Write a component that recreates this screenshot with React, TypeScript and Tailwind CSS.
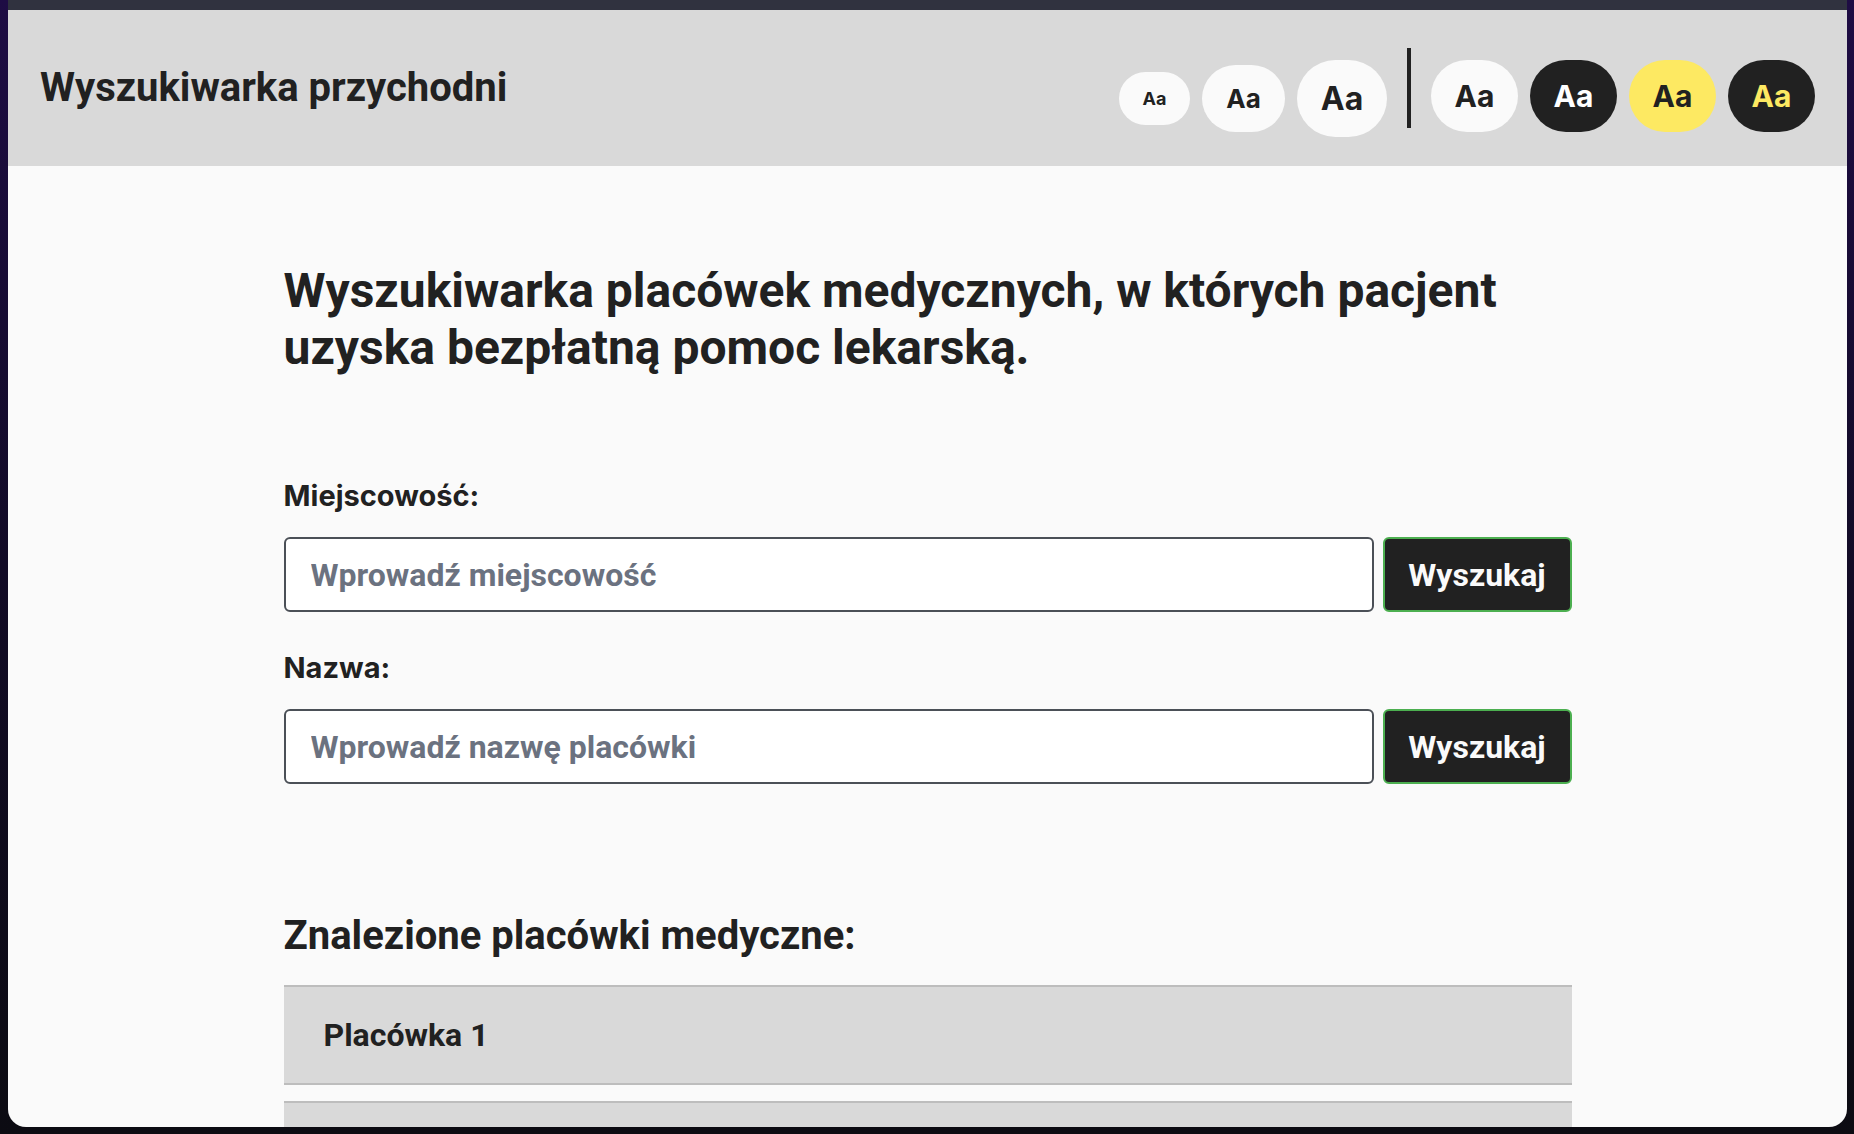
import { useState } from "react";

const sizeButtons = [
  { size: "text-[18px] w-[71px] h-[53px]" },
  { size: "text-[26px] w-[83px] h-[67px]" },
  { size: "text-[32px] w-[90px] h-[77px]" },
];

const themeButtons = [
  { cls: "bg-[#fafafa] text-[#212121]" },
  { cls: "bg-[#212121] text-white" },
  { cls: "bg-[#fde962] text-[#212121]" },
  { cls: "bg-[#212121] text-[#fde962]" },
];

function SearchField({ label, placeholder }: { label: string; placeholder: string }) {
  const [value, setValue] = useState("");
  return (
    <div className="flex flex-col">
      <label className="font-[Inter,sans-serif] font-bold text-[29px] leading-[36px] text-[#212121] mb-[23px]">
        {label}
      </label>
      <div className="flex gap-[9px]">
        <input
          value={value}
          onChange={(e) => setValue(e.target.value)}
          placeholder={placeholder}
          className="flex-1 h-[75px] rounded-md border-2 border-[#4b5057] bg-white px-[25px] font-[Roboto,sans-serif] font-bold text-[32px] text-[#212121] placeholder:text-[#6b7280] outline-none"
        />
        <button className="w-[189px] h-[75px] rounded-md border-2 border-[#4caf50] bg-[#212121] font-[Roboto,sans-serif] font-bold text-[32px] text-[#fafafa]">
          Wyszukaj
        </button>
      </div>
    </div>
  );
}

export default function App() {
  return (
    <div className="w-[1854px] h-[1134px] overflow-hidden bg-gradient-to-b from-[#1e0c44] via-[#120b26] to-[#0c0b12]">
      <div className="ml-[8px] w-[1839px] h-[1127px] flex flex-col overflow-hidden rounded-b-[18px] bg-[#fafafa]">
        <div className="h-[10px] shrink-0 bg-[#30323f]" />

        <header className="h-[156px] shrink-0 flex items-center justify-between px-8 bg-[#d9d9d9]">
          <h1 className="font-[Roboto,sans-serif] font-bold text-[40px] leading-[48px] text-[#212121]">
            Wyszukiwarka przychodni
          </h1>
          <div className="flex items-center gap-5 font-[Inter,sans-serif] font-bold">
            <div className="flex items-center gap-3 mt-[21px]">
              {sizeButtons.map((b, i) => (
                <button
                  key={i}
                  className={`${b.size} flex items-center justify-center rounded-full bg-[#fafafa] text-[#212121]`}
                >
                  Aa
                </button>
              ))}
            </div>
            <div className="w-[4px] h-[80px] bg-[#212121]" />
            <div className="flex items-center gap-3 mt-[16px]">
              {themeButtons.map((b, i) => (
                <button
                  key={i}
                  className={`${b.cls} w-[87px] h-[72px] flex items-center justify-center rounded-full text-[30px]`}
                >
                  Aa
                </button>
              ))}
            </div>
          </div>
        </header>

        <main className="shrink-0 w-[1288px] mx-auto pt-[96px] text-[#212121]">
          <h2 className="font-[Roboto,sans-serif] font-bold text-[48px] leading-[57px]">
            Wyszukiwarka placówek medycznych, w których pacjent
            <br />
            uzyska bezpłatną pomoc lekarską.
          </h2>

          <div className="mt-[102px] flex flex-col gap-[38px]">
            <SearchField label="Miejscowość:" placeholder="Wprowadź miejscowość" />
            <SearchField label="Nazwa:" placeholder="Wprowadź nazwę placówki" />
          </div>

          <h3 className="mt-[128px] mb-[25px] font-[Roboto,sans-serif] font-bold text-[40px] leading-[48px]">
            Znalezione placówki medyczne:
          </h3>

          <ul className="flex flex-col gap-4">
            {["Placówka 1", ""].map((name, i) => (
              <li
                key={i}
                className="h-[100px] flex items-center px-10 border-y-2 border-[#bdbdbd] bg-[#d9d9d9] font-[Roboto,sans-serif] font-bold text-[32px]"
              >
                {name}
              </li>
            ))}
          </ul>
        </main>
      </div>
    </div>
  );
}
